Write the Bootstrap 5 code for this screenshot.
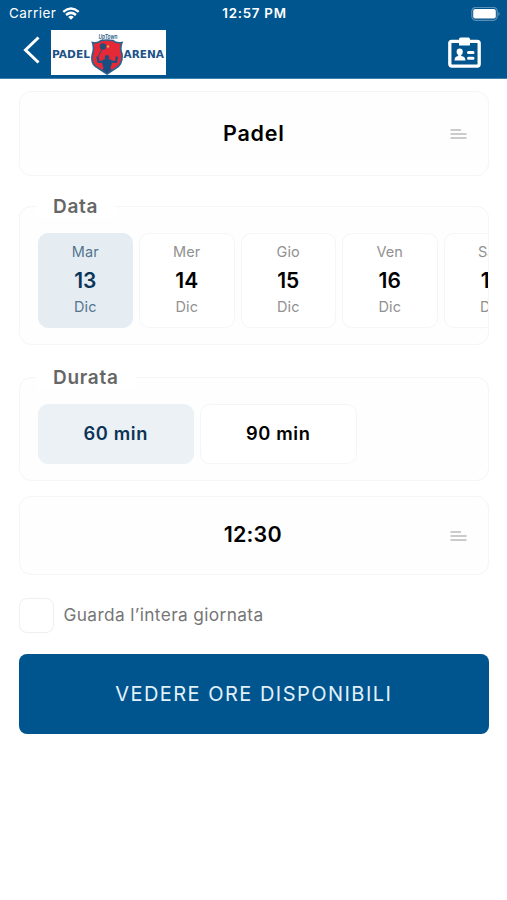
<!DOCTYPE html>
<html lang="it">
<head>
<meta charset="utf-8">
<meta name="viewport" content="width=device-width, initial-scale=1">
<title>Padel Arena</title>
<link rel="stylesheet" href="https://cdn.jsdelivr.net/npm/bootstrap@5.3.0/dist/css/bootstrap.min.css">
<style>
body{font-family:Inter,"Liberation Sans",sans-serif;color:#000;background:#fff;line-height:1}
.topbar{background:#00558e;height:79px;border-bottom:1px solid #3f80ad}
.status{height:28px;padding:0 5px 0 9px;font-size:13.5px}
.status>*{flex:1 1 0}
.carrier{letter-spacing:.42px;margin-right:6px}
.clock{font-weight:600;font-size:13.3px;letter-spacing:.75px}
.clock span{position:relative;left:-1px}
.appbar{height:50px;padding:2px 26px 3px 23px}
.back{margin-top:-5px}
.logo{width:115px;height:45px;margin-left:11px}
main{padding:12px 18.5px 0 19px}
.panel{border:1.5px solid #f4f5f5;border-radius:12px;background:#fefefe}
.picker{font-weight:600;font-size:21.5px;letter-spacing:.75px;position:relative}
.picker svg{position:absolute;right:21px}
.p-sport{height:85px}
.p-time{height:79px;margin-top:15px;letter-spacing:.15px}
.p-time span{margin:-1px 2px 0 0}
.caption{font-size:19px;font-weight:600;color:#666;background:#fff;height:22px;line-height:22px;width:max-content;margin:-11px 0 0 16px;padding:0 17px;letter-spacing:.7px}
.dates{height:139px;margin-top:30px}
.lengths{height:104px;margin-top:32px}
.strip{margin:15px 0 0 17.5px;gap:6px;overflow:hidden}
.tile{flex:none;border:1.5px solid #f4f5f5;border-radius:10px;background:#fff}
.day{width:95.5px;height:95px;padding-top:11px;font-size:14.5px;color:#919191;letter-spacing:.1px}
.day b{font-size:21px;font-weight:600;color:#000;letter-spacing:0;margin:10px 0 9px}
.picked{background:#e5edf3;border-color:#e5edf3;color:#55758e}
.day.picked b,.len.picked{color:#0b3457}
.len{width:156.5px;height:60px;padding-bottom:2px;font-size:18.3px;font-weight:600;letter-spacing:.65px}
.len.picked{background:#ebf1f5;border-color:#ebf1f5}
.whole{height:35px;margin-top:23px;font-size:17.3px;color:#767676;letter-spacing:.37px}
.whole span{padding-bottom:2px}
.whole .form-check-input{width:34.5px;height:34.5px;border:1.5px solid #eeefef;border-radius:8px;margin:0 10px 0 0}
.cta{height:80px;margin-top:21px;background:#00558e;color:#e3f1fb;border:0;border-radius:8px;font-size:20px;font-weight:400;letter-spacing:1.47px}
</style>
<script src="https://cdn.jsdelivr.net/npm/bootstrap@5.3.0/dist/js/bootstrap.bundle.min.js"></script>
</head>
<body>
<header class="topbar text-white">
  <div class="status d-flex align-items-center">
    <div class="d-flex align-items-center"><span class="carrier">Carrier</span>
      <svg width="18" height="14" viewBox="0 0 20 15" fill="none" stroke="#fff" stroke-width="2.700"><path d="M1.400 5.100Q10-2.300 18.600 5.100M4.500 8.600Q10 3.900 15.500 8.600"/><path d="M10 14L6.900 10.900Q10 8.200 13.100 10.900Z" fill="#fff" stroke="none"/></svg>
    </div>
    <div class="clock text-center"><span>12:57 PM</span></div>
    <div class="d-flex justify-content-end"><svg width="31" height="15" viewBox="0 0 31 15"><rect x=".8" y=".3" width="25.400" height="13" rx="4" fill="none" stroke="#5a90b8" stroke-width="1.200"/><rect x="2.200" y="1.900" width="22.600" height="9.600" rx="2" fill="#fff"/><path d="M27.500 4.700q2.200 2.100 0 4.200z" fill="#6f9fc2"/></svg></div>
  </div>
  <div class="appbar d-flex align-items-center">
    <svg class="back" width="17" height="28" viewBox="0 0 17 28" fill="none" stroke="#fff" stroke-width="3"><path d="M15.500 1.500L2.500 14L15.500 26.500"/></svg>
    <svg class="logo" viewBox="0 0 115 45">
      <rect width="115" height="45" fill="#fff"/>
      <text x="47.500" y="9" font-family="Inter,sans-serif" font-size="6.500" font-weight="600" font-style="italic" fill="#285b86" textLength="19" lengthAdjust="spacingAndGlyphs">UpTown</text>
      <path d="M41.500 12.500Q47 13.500 50 10.500Q56 9.500 62 10.500Q65 13.500 71 12.500Q68.500 18 71 24Q72 34 65 38L56 44L47 38Q39 34 41.500 24Q43.500 18 41.500 12.500Z" fill="#e52936" stroke="#2b638f" stroke-width="1.700"/>
      <path d="M52 29.500Q56 28.500 60 29.500L61 33L59.500 38L60.500 40L56 43.500L51.500 40L52.500 38L51 33Z" fill="#174f83"/>
      <circle cx="56" cy="27.300" r="2.200" fill="#174f83"/>
      <path d="M53 31.500L47.500 32L46.500 26.500M59 31.500L65 32L66 26.500" fill="none" stroke="#174f83" stroke-width="2.200" stroke-linejoin="round"/>
      <path d="M46.500 28L51 19" stroke="#294d7b" stroke-width="1"/><circle cx="52" cy="16.500" r="3.200" fill="#294d7b"/><circle cx="57" cy="16.500" r="1.300" fill="#e7a047"/>
      <g font-family="DejaVu Sans,sans-serif" font-size="11" font-weight="700" fill="#1c5388"><text x="1" y="28" textLength="38" lengthAdjust="spacingAndGlyphs">PADEL</text><text x="72.500" y="28" textLength="40.500" lengthAdjust="spacingAndGlyphs">ARENA</text></g>
    </svg>
    <svg class="ms-auto" width="33" height="32" viewBox="0 0 33 32"><rect x="1.800" y="4.300" width="29.400" height="24.800" rx="2" fill="none" stroke="#fff" stroke-width="3.300"/><path d="M11 4V2.500Q11 .5 12.500 .5h8Q22 .5 22 2.500V8.500H11z" fill="#fff"/><ellipse cx="11.700" cy="14.800" rx="3.100" ry="3.400" fill="#fff"/><path d="M10.200 17h3v2q4.300.4 4.300 4.500H6.500q0-4.100 3.700-4.500z" fill="#fff"/><path d="M20.500 15.500h4.500M20.500 21.200h4.500" stroke="#fff" stroke-width="3" stroke-linecap="round"/></svg>
  </div>
</header>
<main>
  <div class="panel picker p-sport d-flex align-items-center justify-content-center"><span>Padel</span><svg width="17" height="10" viewBox="0 0 17 10" stroke="#bbb" stroke-width="1.400"><path d="M.5 1h10.500M.5 5H16.500M.5 9H16.500"/></svg></div>

  <section class="panel dates">
    <div class="caption">Data</div>
    <div class="strip d-flex">
      <div class="tile day picked d-flex flex-column align-items-center"><span>Mar</span><b>13</b><span>Dic</span></div>
      <div class="tile day d-flex flex-column align-items-center"><span>Mer</span><b>14</b><span>Dic</span></div>
      <div class="tile day d-flex flex-column align-items-center"><span>Gio</span><b>15</b><span>Dic</span></div>
      <div class="tile day d-flex flex-column align-items-center"><span>Ven</span><b>16</b><span>Dic</span></div>
      <div class="tile day d-flex flex-column align-items-center"><span>Sab</span><b>17</b><span>Dic</span></div>
    </div>
  </section>

  <section class="panel lengths">
    <div class="caption">Durata</div>
    <div class="strip d-flex">
      <div class="tile len picked d-flex align-items-center justify-content-center">60 min</div>
      <div class="tile len d-flex align-items-center justify-content-center">90 min</div>
    </div>
  </section>

  <div class="panel picker p-time d-flex align-items-center justify-content-center"><span>12:30</span><svg width="17" height="10" viewBox="0 0 17 10" stroke="#bbb" stroke-width="1.400"><path d="M.5 1h10.500M.5 5H16.500M.5 9H16.500"/></svg></div>

  <label class="whole d-flex align-items-center"><input class="form-check-input" type="checkbox"><span>Guarda l’intera giornata</span></label>
  <button class="btn cta w-100">VEDERE ORE DISPONIBILI</button>
</main>
</body>
</html>
